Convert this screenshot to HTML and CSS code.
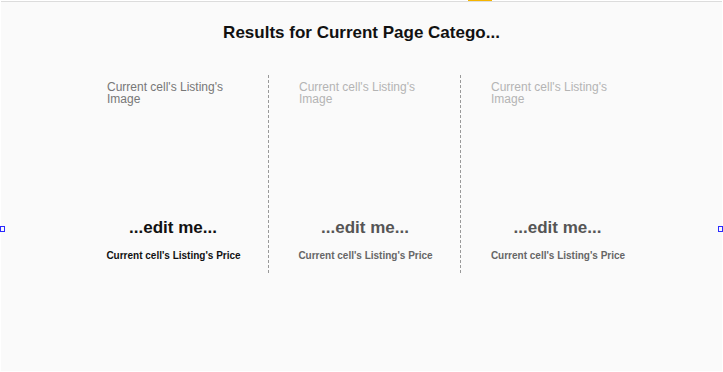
FILE: index.html
```html
<!DOCTYPE html>
<html lang="en">

<head>
    <meta charset="UTF-8">
    <meta name="viewport" content="width=device-width, initial-scale=1.0">
    <title>Results</title>
    <link rel="stylesheet" href="styles.css">
</head>

<body>
    <div class="tab-marker"></div>
    <div class="page">
        <h1 class="results-title">Results for Current Page Catego...</h1>

        <div class="results-grid">
            <div class="cell">
                <div class="cell-image">Current cell's Listing's Image</div>
                <div class="cell-title">...edit me...</div>
                <div class="cell-price">Current cell's Listing's Price</div>
            </div>
            <div class="cell cell-repeat">
                <div class="cell-image">Current cell's Listing's Image</div>
                <div class="cell-title">...edit me...</div>
                <div class="cell-price">Current cell's Listing's Price</div>
            </div>
            <div class="cell cell-repeat">
                <div class="cell-image">Current cell's Listing's Image</div>
                <div class="cell-title">...edit me...</div>
                <div class="cell-price">Current cell's Listing's Price</div>
            </div>
        </div>

        <!-- resize handles -->
        <div class="handle handle-left"></div>
        <div class="handle handle-right"></div>
    </div>
</body>

</html>
```

FILE: styles.css
```css
body {
    font-family: "Liberation Sans", Arial, sans-serif;
    margin: 0;
    padding: 0;
    background-color: #fff;
}

.tab-marker {
    position: absolute;
    top: 0;
    left: 468px;
    width: 24px;
    height: 3px;
    background-color: #f5b400;
}

.page {
    position: relative;
    margin: 0 1px;
    margin-top: 1px;
    height: 369px;
    border-top: 1px solid #dcdcdc;
    background-color: #fafafa;
}

.results-title {
    margin: 0;
    padding-top: 21px;
    text-align: center;
    font-size: 17px;
    line-height: 20px;
    font-weight: bold;
    color: #111;
}

.results-grid {
    display: flex;
    margin-top: 32px;
    margin-left: 76px;
}

.cell {
    width: 192px;
    height: 198px;
    box-sizing: border-box;
    padding-top: 6px;
    border-right: 1px dashed #999;
    text-align: center;
}

.cell:last-child {
    border-right: none;
}

.cell-image {
    width: 130px;
    height: 130px;
    margin-left: 30px;
    text-align: left;
    font-size: 12px;
    line-height: 12px;
    color: #777;
}

.cell-title {
    margin-top: 6px;
    padding-left: 1px;
    font-size: 17px;
    line-height: 22px;
    font-weight: bold;
    color: #111;
}

.cell-price {
    margin-top: 11px;
    padding-left: 2px;
    font-size: 10px;
    line-height: 12px;
    font-weight: bold;
    color: #111;
}

.cell-repeat .cell-image {
    color: #b4b4b4;
}

.cell-repeat .cell-title {
    color: #555;
}

.cell-repeat .cell-price {
    color: #666;
}

.handle {
    position: absolute;
    top: 224px;
    width: 3px;
    height: 4px;
    border: 1px solid #2b2bff;
}

.handle-left {
    left: -1px;
}

.handle-right {
    right: -1px;
}
```
